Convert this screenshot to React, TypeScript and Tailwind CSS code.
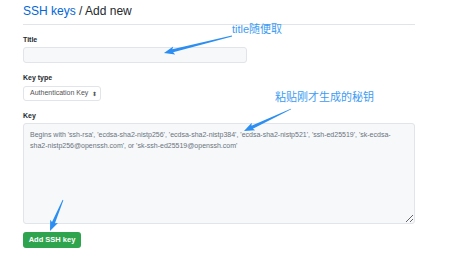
const KEY_HINT =
  "Begins with 'ssh-rsa', 'ecdsa-sha2-nistp256', 'ecdsa-sha2-nistp384', 'ecdsa-sha2-nistp521', 'ssh-ed25519', 'sk-ecdsa-sha2-nistp256@openssh.com', or 'sk-ssh-ed25519@openssh.com'";

// tapered annotation arrow, tail -> head
function arrowPoints(tx: number, ty: number, hx: number, hy: number) {
  const dx = hx - tx;
  const dy = hy - ty;
  const len = Math.hypot(dx, dy);
  const ux = dx / len;
  const uy = dy / len;
  const nx = -uy;
  const ny = ux;
  const headLen = 9;
  const neck = len - headLen;
  const bx = tx + ux * neck;
  const by = ty + uy * neck;
  const pts: [number, number][] = [
    [tx + nx * 0.4, ty + ny * 0.4],
    [bx + nx * 1.6, by + ny * 1.6],
    [bx + nx * 4.2 - ux * 1.5, by + ny * 4.2 - uy * 1.5],
    [hx, hy],
    [bx - nx * 4.2 - ux * 1.5, by - ny * 4.2 - uy * 1.5],
    [bx - nx * 1.6, by - ny * 1.6],
    [tx - nx * 0.4, ty - ny * 0.4],
  ];
  return pts.map((p) => p.join(',')).join(' ');
}

const ARROWS = [
  { t: [232, 36], h: [164, 53] },
  { t: [291, 109], h: [244, 131] },
  { t: [63, 200], h: [50, 231] },
];

function Annotations() {
  return (
    <>
      <svg className="absolute left-0 top-0 pointer-events-none" width="450" height="272">
        {ARROWS.map((a, i) => (
          <polygon key={i} points={arrowPoints(a.t[0], a.t[1], a.h[0], a.h[1])} fill="#2b8ef0" />
        ))}
      </svg>
      <div className="absolute left-[232px] top-[22px] text-[11px] leading-[14px] text-[#3d9bf2] font-['Liberation_Sans','Noto_Sans_CJK_SC',sans-serif]">
        title随便取
      </div>
      <div className="absolute left-[275px] top-[90px] text-[11px] leading-[14px] text-[#3d9bf2] font-['Liberation_Sans','Noto_Sans_CJK_SC',sans-serif]">
        粘贴刚才生成的秘钥
      </div>
    </>
  );
}

export default function App() {
  return (
    <div className="relative w-[450px] h-[272px] bg-white overflow-hidden font-['Liberation_Sans',Arial,sans-serif] text-[#24292e]">
      <div className="ml-[23px] w-[392px] flex flex-col">
        <div className="pt-[4px] pb-[5px] border-b border-[#e1e4e8] text-[12px] leading-[15px] whitespace-nowrap">
          <span className="text-[#0366d6]">SSH keys</span> / Add new
        </div>

        <label className="mt-[10px] text-[7px] leading-[9px] font-bold">Title</label>
        <input
          className="mt-[3px] w-[224px] h-[16px] rounded-[3px] border border-[#e1e4e8] bg-[#f6f8fa] outline-none"
        />

        <label className="mt-[10px] text-[7px] leading-[9px] font-bold">Key type</label>
        <div className="mt-[4px] w-[78px] h-[15px] rounded-[3px] border border-[#e1e4e8] bg-white flex items-center gap-[4px] pl-[6px] text-[7px] text-[#555] whitespace-nowrap">
          <span>Authentication Key</span>
          <span className="text-[6px] leading-none">⬍</span>
        </div>

        <label className="mt-[10px] text-[7px] leading-[9px] font-bold">Key</label>
        <textarea
          placeholder={KEY_HINT}
          className="mt-[3px] w-[392px] h-[101px] rounded-[3px] border border-[#e1e4e8] bg-[#f6f8fa] px-[6px] py-[5px] text-[7px] leading-[11px] text-[#24292e] placeholder:text-[#6a737d] outline-none"
        />

        <button className="mt-[8px] w-[58px] h-[16px] rounded-[3px] bg-[#2ea44f] text-white text-[7.5px] font-bold leading-none">
          Add SSH key
        </button>
      </div>
      <Annotations />
    </div>
  );
}
